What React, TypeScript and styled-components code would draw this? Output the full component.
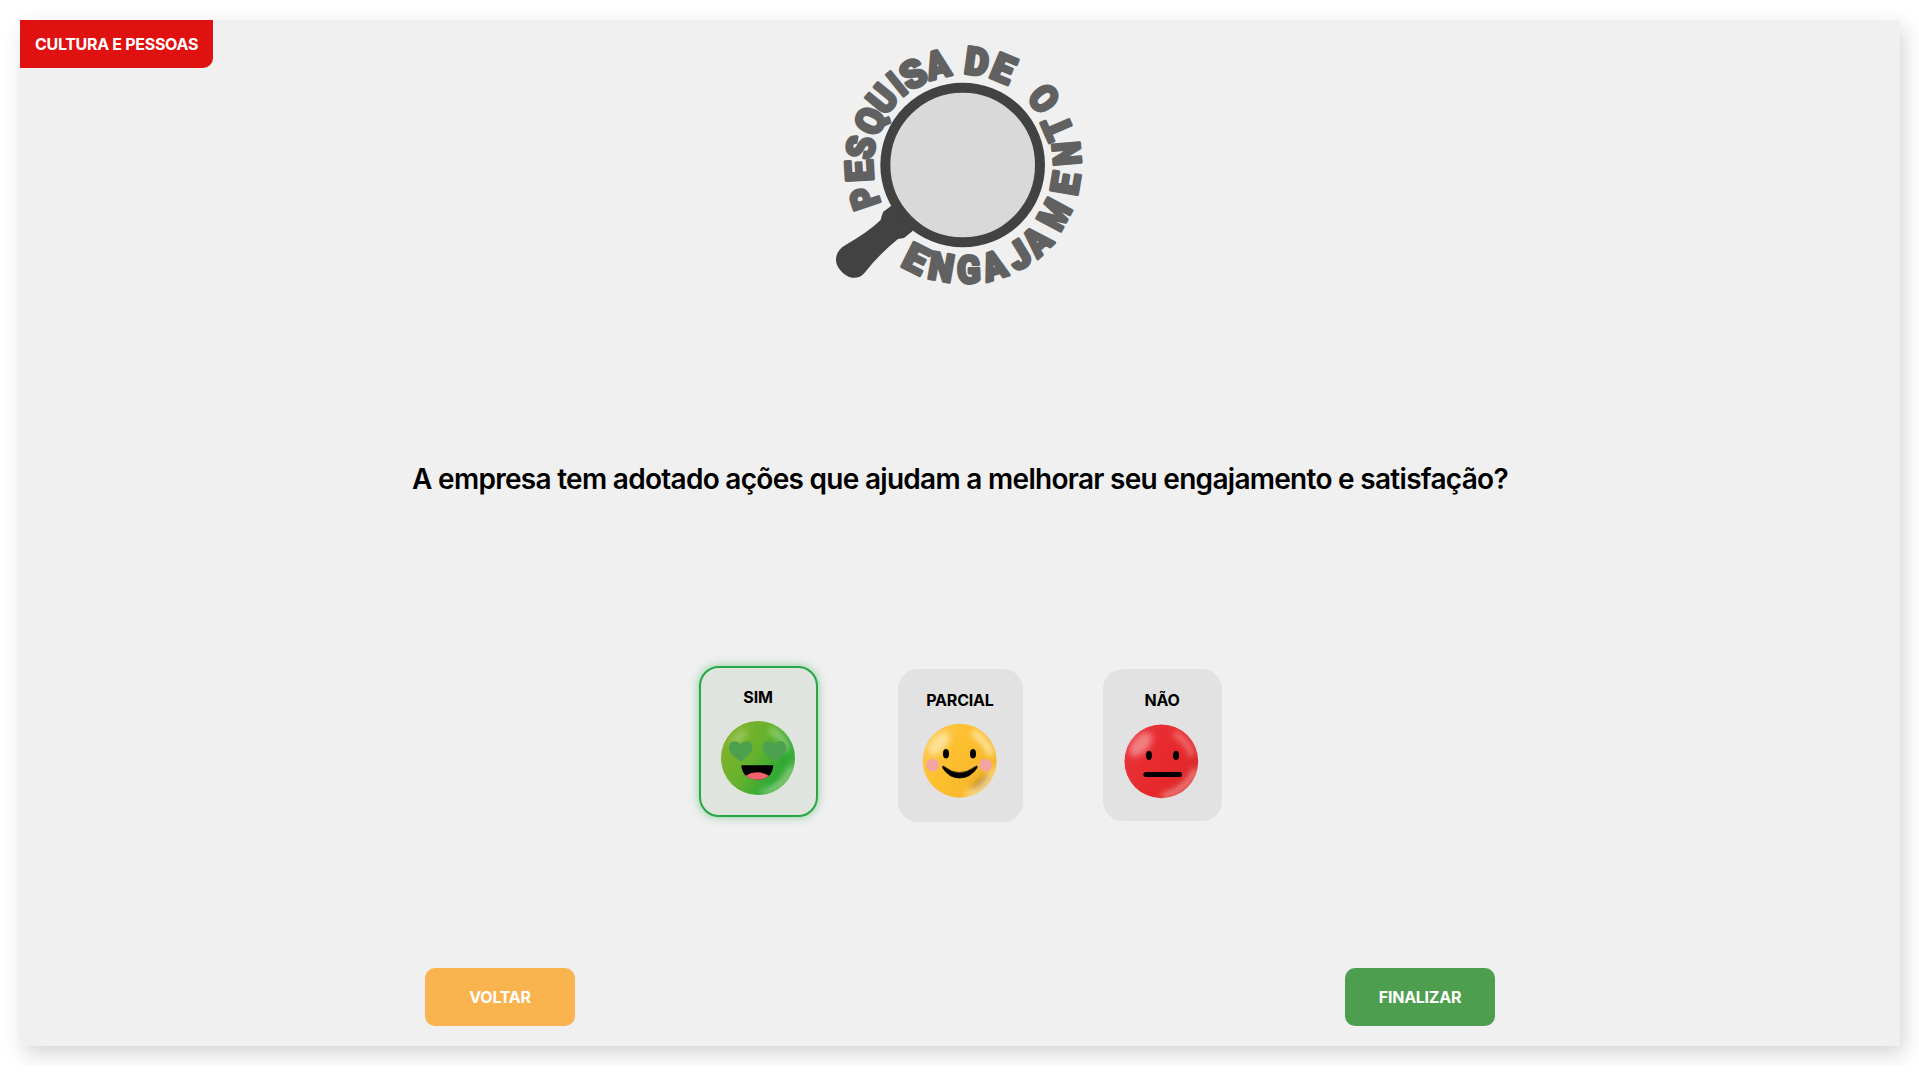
import React from "react";
import styled, { createGlobalStyle } from "styled-components";

const GlobalStyle = createGlobalStyle`
  *, *::before, *::after { box-sizing: border-box; }
  body {
    margin: 0;
    background: #fff;
    color: #000;
    font-family: Inter, "Liberation Sans", sans-serif;
  }
`;

const Page = styled.div`
  height: 1066px;
  padding: 20px 19px 20px 20px;
  display: flex;
`;

const Panel = styled.main`
  flex: 1;
  display: flex;
  flex-direction: column;
  align-items: center;
  background: #f0f0f0;
  box-shadow: 4px 8px 20px rgba(0, 0, 0, 0.17);
  padding-bottom: 20px;
`;

const Header = styled.header`
  width: 100%;
  height: 280px;
  display: grid;
  grid-template-columns: 1fr 280px 1fr;
  align-items: start;
  padding-right: 1px;
`;

const Tag = styled.span`
  justify-self: start;
  width: 193px;
  height: 48px;
  padding-left: 15px;
  display: flex;
  align-items: center;
  background: #e01111;
  color: #fff;
  font-size: 16px;
  font-weight: 700;
  letter-spacing: -0.3px;
  white-space: nowrap;
  border-bottom-right-radius: 10px;
`;

const Logo = styled.svg`
  width: 280px;
  height: 270px;
  margin-top: 10px;
  font-family: Roboto, "Open Sans", sans-serif;
  font-weight: 900;
  font-size: 115px;
`;

const Question = styled.h1`
  margin: 162px 0 0;
  height: 34px;
  line-height: 34px;
  font-size: 28px;
  font-weight: 600;
  letter-spacing: -0.71px;
  white-space: nowrap;
`;

const Options = styled.div`
  margin-top: 169px;
  display: flex;
  align-items: flex-start;
  gap: 80px;
`;

const Option = styled.button<{ $width: number; $height: number; $selected?: boolean }>`
  width: ${(p) => p.$width}px;
  height: ${(p) => p.$height}px;
  margin-top: ${(p) => (p.$selected ? 1 : 4)}px;
  padding: ${(p) => (p.$selected ? "18px 0 0" : "20px 0 0")};
  display: flex;
  flex-direction: column;
  align-items: center;
  gap: 12px;
  border: ${(p) => (p.$selected ? "2px solid #28a745" : "0")};
  border-radius: 20px;
  background: ${(p) => (p.$selected ? "#dfe4df" : "#e2e2e2")};
  box-shadow: ${(p) => (p.$selected ? "0 0 10px rgba(40, 167, 69, 0.5)" : "none")};
  color: #000;
  font: 700 16px/22px Inter, sans-serif;
  letter-spacing: -0.2px;
`;

const Face = styled.svg`
  width: 76px;
  height: 76px;
  flex: none;
`;

const Actions = styled.footer`
  width: 1070px;
  margin-top: auto;
  display: flex;
  justify-content: space-between;
`;

const ActionButton = styled.button<{ $color: string }>`
  width: 150px;
  height: 58px;
  border: 0;
  border-radius: 10px;
  background: ${(p) => p.$color};
  color: #fff;
  font: 700 16px Inter, sans-serif;
  letter-spacing: -0.25px;
`;

type Glyph = [char: string, x: number, y: number, angle: number, stretch: number];

const LETTERS: Glyph[] = [
  ["P", 133, 503, -108.4, 0.86],
  ["E", 118, 423, -93.3, 1],
  ["S", 122, 352, -80.2, 0.92],
  ["Q", 150, 273, -64.6, 0.94],
  ["U", 186, 206, -50.6, 0.92],
  ["I", 231, 161, -38.9, 0.85],
  ["S", 279, 131, -28.5, 1],
  ["A", 353, 103, -14, 0.9],
  ["D", 471, 94, 7.9, 0.96],
  ["E", 550, 115, 22.8, 1.02],
  ["O", 672, 205, -129.3, 0.9],
  ["T", 712, 293, -113.5, 0.95],
  ["N", 740, 371, -95, 0.88],
  ["E", 736, 460, -80.5, 1.02],
  ["M", 703, 553, -61.7, 0.82],
  ["A", 650, 633, -44.2, 0.9],
  ["J", 595, 675, -31.7, 1],
  ["A", 522, 706, -17.3, 0.9],
  ["G", 446, 718, -2, 0.9],
  ["N", 364, 711, 10, 0.92],
  ["E", 288, 686, 26.5, 1.06],
];

function SurveyLogo() {
  return (
    <Logo viewBox="0 0 840 810">
      <path
        d="M214 527 L190 545 Q184 558 182 570 Q145 606 78 644 C48 660 40 690 56 714 C78 746 112 754 134 728 Q178 672 234 627 L252 624 L278 603 L290 560 L250 510 Z"
        fill="#424242"
      />
      <circle cx="428" cy="405" r="232" fill="#d9d9d9" stroke="#424242" strokeWidth="30" />
      <g fill="#616161" stroke="#616161" strokeWidth="9" strokeLinejoin="round" textAnchor="middle">
        {LETTERS.map(([char, x, y, angle, stretch], i) => (
          <text key={i} y="41" transform={`translate(${x} ${y}) rotate(${angle}) scale(${stretch} 1)`}>
            {char}
          </text>
        ))}
      </g>
      <path d="M816 30h8v9l-3-5z" fill="#f7f7f7" />
    </Logo>
  );
}

function LoveFace() {
  return (
    <Face viewBox="0 0 228 228">
      <defs>
        <linearGradient id="green" x1="0" y1="0.2" x2="1" y2="0.8">
          <stop offset="0" stopColor="#86b32b" />
          <stop offset="0.45" stopColor="#65b22c" />
          <stop offset="0.78" stopColor="#2fa935" />
          <stop offset="1" stopColor="#62b548" />
        </linearGradient>
        <filter id="soft" x="-50%" y="-50%" width="200%" height="200%">
          <feGaussianBlur stdDeviation="9" />
        </filter>
        <clipPath id="ball"><circle cx="114" cy="114" r="111" /></clipPath>
      </defs>
      <circle cx="114" cy="114" r="111" fill="url(#green)" />
      <g clipPath="url(#ball)" fill="none" filter="url(#soft)">
        <ellipse cx="57" cy="52" rx="32" ry="15" transform="rotate(-42 57 52)" fill="#b5d887" opacity="0.5" />
        <path d="M150 28 Q190 48 203 92" stroke="#b9dba0" strokeWidth="16" opacity="0.75" />
        <path d="M125 218 Q192 204 218 140" stroke="#c4e4ba" strokeWidth="9" />
      </g>
      <g fill="#4da04e">
        <path d="M62 125C43 111 26 98 27 80C28 61 52 58 62 73C72 58 96 61 97 80C98 98 81 111 62 125Z" />
        <path d="M164 125C145 111 128 98 129 80C130 61 154 58 164 73C174 58 198 61 199 80C200 98 183 111 164 125Z" />
      </g>
      <path d="M64 136H160C158 165 140 179 112 179C84 179 66 165 64 136Z" />
      <path d="M77 167Q111 147 147 167Q134 179 112 179Q90 179 77 167Z" fill="#f0626e" />
    </Face>
  );
}

function SmileFace() {
  return (
    <Face viewBox="0 0 228 228">
      <defs>
        <linearGradient id="yellow" x1="0" y1="0.2" x2="1" y2="0.8">
          <stop offset="0" stopColor="#fbc94f" />
          <stop offset="0.4" stopColor="#fdbf2d" />
          <stop offset="1" stopColor="#f3b62c" />
        </linearGradient>
      </defs>
      <circle cx="113" cy="113" r="111" fill="url(#yellow)" />
      <g clipPath="url(#ball)" fill="none" filter="url(#soft)">
        <ellipse cx="50" cy="62" rx="42" ry="22" transform="rotate(-48 50 62)" fill="#ffe6a4" opacity="0.9" />
        <path d="M150 28 Q192 48 208 96" stroke="#ffedb8" strokeWidth="17" />
        <ellipse cx="177" cy="180" rx="34" ry="14" transform="rotate(-42 177 180)" fill="#c08c18" />
        <path d="M130 218 Q196 202 218 136" stroke="#fff1c4" strokeWidth="11" />
      </g>
      <circle cx="32" cy="126" r="19" fill="#f3a3a0" />
      <circle cx="191" cy="126" r="19" fill="#f3a3a0" />
      <ellipse cx="72" cy="92" rx="9" ry="14" />
      <ellipse cx="153" cy="92" rx="9" ry="14" />
      <path d="M67 131Q111 167 160 131Q167 125 165 135Q145 165 113 165Q81 165 62 135Q60 126 67 131Z" stroke="#000" strokeWidth="2" />
    </Face>
  );
}

function NeutralFace() {
  return (
    <Face viewBox="0 0 228 228">
      <defs>
        <linearGradient id="red" x1="0" y1="0.2" x2="1" y2="0.8">
          <stop offset="0" stopColor="#e9333a" />
          <stop offset="0.6" stopColor="#e6282b" />
          <stop offset="1" stopColor="#d92b2e" />
        </linearGradient>
      </defs>
      <circle cx="112" cy="115" r="110.5" fill="url(#red)" />
      <g clipPath="url(#ball)" fill="none" filter="url(#soft)">
        <ellipse cx="50" cy="64" rx="44" ry="24" transform="rotate(-48 50 64)" fill="#f59a9c" opacity="0.75" />
        <path d="M150 30 Q190 50 205 98" stroke="#f28b88" strokeWidth="16" opacity="0.85" />
        <path d="M115 219 Q188 204 216 138" stroke="#f7b5ae" strokeWidth="11" />
      </g>
      <ellipse cx="75" cy="97" rx="9" ry="14" />
      <ellipse cx="156" cy="97" rx="9" ry="14" />
      <rect x="58" y="147" width="116" height="15" rx="7" />
    </Face>
  );
}

export default function App() {
  return (
    <Page>
      <GlobalStyle />
      <Panel>
        <Header>
          <Tag>CULTURA E PESSOAS</Tag>
          <SurveyLogo />
        </Header>
        <Question>A empresa tem adotado ações que ajudam a melhorar seu engajamento e satisfação?</Question>
        <Options>
          <Option $width={119} $height={151} $selected>
            SIM
            <LoveFace />
          </Option>
          <Option $width={125} $height={153}>
            PARCIAL
            <SmileFace />
          </Option>
          <Option $width={119} $height={152}>
            NÃO
            <NeutralFace />
          </Option>
        </Options>
        <Actions>
          <ActionButton $color="#f9b450">VOLTAR</ActionButton>
          <ActionButton $color="#4d9f4f">FINALIZAR</ActionButton>
        </Actions>
      </Panel>
    </Page>
  );
}
